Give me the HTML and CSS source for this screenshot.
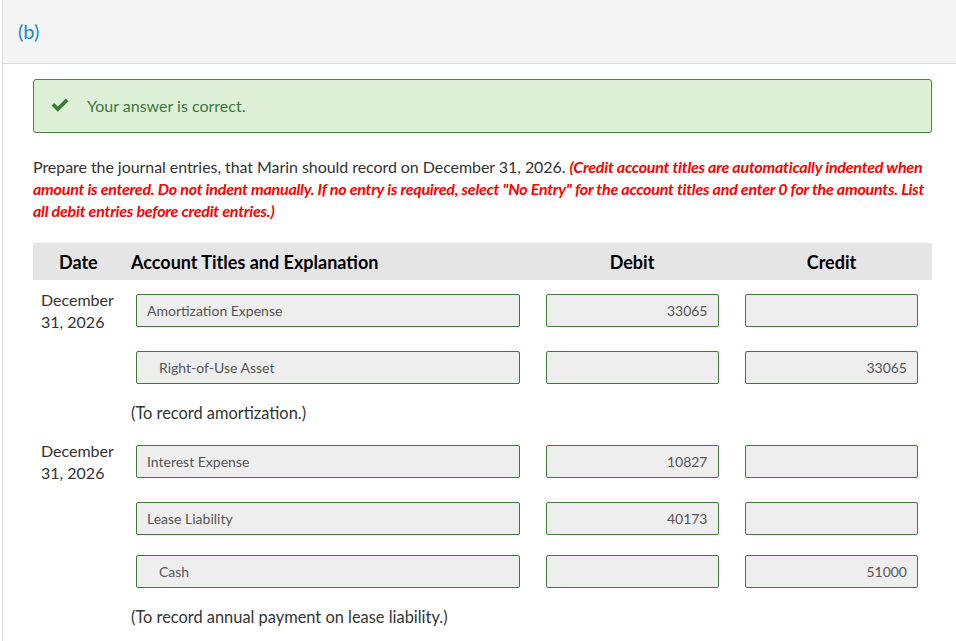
FILE: index.html
```html
<!DOCTYPE html>
<html>
<head>
<meta charset="utf-8">
<link rel="stylesheet" href="styles.css">
</head>
<body>
<div class="panel">
  <div class="panel-head">(b)</div>
  <div class="panel-body">
    <div class="alert">
      <svg class="check" width="18" height="14" viewBox="0 0 18 14"><path d="M0.6 7.6 L3.2 5.0 L6.8 8.6 L14.8 0.6 L17.4 3.2 L6.8 13.8 Z" fill="#3d7a35"/></svg>
      <span>Your answer is correct.</span>
    </div>
    <p class="question"><span class="lead">Prepare the journal entries, that Marin should record on December 31, 2026.</span> <em class="note">(Credit account titles are automatically indented when amount is entered. Do not indent manually. If no entry is required, select "No Entry" for the account titles and enter 0 for the amounts. List all debit entries before credit entries.)</em></p>

    <div class="journal">
      <div class="jhead">
        <div class="h-date">Date</div>
        <div class="h-acct">Account Titles and Explanation</div>
        <div class="h-num">Debit</div>
        <div class="h-num">Credit</div>
      </div>

      <div class="entry">
        <div class="jrow">
          <div class="date">December<br>31, 2026</div>
          <div class="acct"><div class="field">Amortization Expense</div></div>
          <div class="num"><div class="field right">33065</div></div>
          <div class="num"><div class="field right"></div></div>
        </div>
        <div class="jrow">
          <div class="date"></div>
          <div class="acct"><div class="field indent">Right-of-Use Asset</div></div>
          <div class="num"><div class="field right"></div></div>
          <div class="num"><div class="field right">33065</div></div>
        </div>
        <div class="explain">(To record amortization.)</div>
      </div>

      <div class="entry second">
        <div class="jrow">
          <div class="date">December<br>31, 2026</div>
          <div class="acct"><div class="field">Interest Expense</div></div>
          <div class="num"><div class="field right">10827</div></div>
          <div class="num"><div class="field right"></div></div>
        </div>
        <div class="jrow">
          <div class="date"></div>
          <div class="acct"><div class="field">Lease Liability</div></div>
          <div class="num"><div class="field right">40173</div></div>
          <div class="num"><div class="field right"></div></div>
        </div>
        <div class="jrow tight">
          <div class="date"></div>
          <div class="acct"><div class="field indent">Cash</div></div>
          <div class="num"><div class="field right"></div></div>
          <div class="num"><div class="field right">51000</div></div>
        </div>
        <div class="explain last">(To record annual payment on lease liability.)</div>
      </div>
    </div>
  </div>
</div>
</body>
</html>
```

FILE: styles.css
```css
* { box-sizing: border-box; }
html, body { margin: 0; padding: 0; background: #fff; }
body {
  font-family: Lato, "Open Sans", sans-serif;
  color: #333;
  overflow: hidden;
}
.panel {
  margin-left: 2px;
  border-left: 1px solid #dcdcdc;
  min-height: 641px;
}
.panel-head {
  height: 64px;
  background: #f4f4f4;
  border-bottom: 1px solid #dcdcdc;
  color: #1b8ac6;
  font-size: 20px;
  padding: 19px 0 0 15px;
  line-height: 24px;
}
.panel-body {
  padding: 15px 0 0 30px;
  width: 929px;
}
.alert {
  display: flex;
  align-items: center;
  height: 54px;
  background: #dff0d8;
  border: 1px solid #4d8046;
  border-radius: 3px;
  padding-left: 17px;
  color: #3c763d;
  font-size: 16px;
  line-height: 20px;
}
.check { margin-right: 18px; margin-top: -2px; }
.question {
  margin: 23px 0 0 0;
  font-size: 16px;
  line-height: 22px;
  color: #333;
}
.lead { letter-spacing: -0.06px; }
.note {
  color: #ff0000;
  font-weight: bold;
  font-style: italic;
  letter-spacing: -0.22px;
}
.journal { margin-top: 21px; }
.jhead {
  display: grid;
  grid-template-columns: 98px 401px 200px 199px;
  height: 37px;
  align-items: center;
  background: #e5e5e5;
  font-weight: bold;
  font-size: 18px;
  color: #000;
}
.h-date { padding-left: 26px; }
.h-num { text-align: center; }
.entry { padding-top: 14px; }
.entry.second { padding-top: 21px; }
.jrow {
  display: grid;
  grid-template-columns: 98px 401px 200px 199px;
  align-items: start;
  margin-bottom: 24px;
}
.jrow.tight { margin-bottom: 20px; }
.entry.second .jrow:nth-child(2) { margin-bottom: 20px; }
.date {
  height: 33px;
  padding-left: 8px;
  margin-top: -5px;
  font-size: 16px;
  line-height: 22px;
  color: #333;
  white-space: nowrap;
}
.acct { padding-left: 5px; }
.acct .field { width: 384px; }
.num { display: flex; justify-content: center; }
.num .field { width: 173px; }
.field {
  height: 33px;
  border: 1px solid #3f7a3a;
  border-radius: 2px;
  background: #eeeeee;
  font-size: 14px;
  line-height: 31px;
  color: #555;
  padding: 0 10px;
  white-space: nowrap;
}
.field.indent { padding-left: 22px; }
.field.right { text-align: right; }
.explain {
  padding-left: 98px;
  margin-top: -6px;
  font-size: 16.4px;
  line-height: 22px;
  color: #333;
}
.explain.last { margin-top: -2px; }
```
